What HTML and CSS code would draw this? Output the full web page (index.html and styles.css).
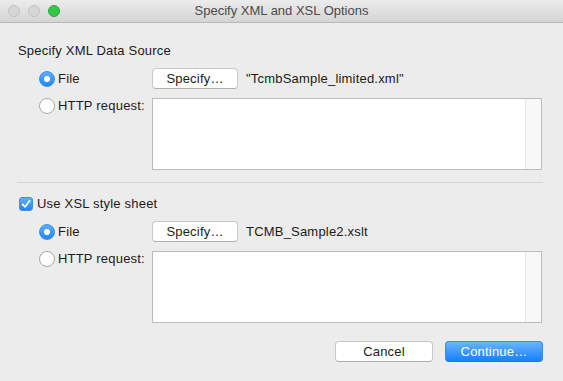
FILE: index.html
```html
<!DOCTYPE html>
<html>
<head>
<meta charset="utf-8">
<link rel="stylesheet" href="styles.css">
</head>
<body>
<div class="window">
  <div class="titlebar">
    <div class="lights">
      <span class="light off"></span>
      <span class="light off"></span>
      <span class="light green"></span>
    </div>
    <div class="title">Specify XML and XSL Options</div>
    <div></div>
  </div>
  <div class="content">
    <div class="heading">Specify XML Data Source</div>
    <div class="options">
      <div class="opt center">
        <span class="radio on"></span><span class="label">File</span>
      </div>
      <div class="ctrl file-row">
        <button class="btn">Specify…</button>
        <span class="filename">"TcmbSample_limited.xml"</span>
      </div>
      <div class="opt top">
        <span class="radio"></span><span class="label">HTTP request:</span>
      </div>
      <div class="ctrl">
        <div class="textarea"><div class="scroll"></div></div>
      </div>
    </div>
    <div class="separator"></div>
    <div class="check-row">
      <span class="checkbox"><svg width="10" height="10" viewBox="0 0 10 10"><path d="M1.6 5.4 L4 7.9 L8.6 1.8" fill="none" stroke="#fff" stroke-width="1.7" stroke-linecap="round" stroke-linejoin="round"/></svg></span>
      <span class="label">Use XSL style sheet</span>
    </div>
    <div class="options second">
      <div class="opt center">
        <span class="radio on"></span><span class="label">File</span>
      </div>
      <div class="ctrl file-row">
        <button class="btn">Specify…</button>
        <span class="filename">TCMB_Sample2.xslt</span>
      </div>
      <div class="opt top">
        <span class="radio"></span><span class="label">HTTP request:</span>
      </div>
      <div class="ctrl">
        <div class="textarea"><div class="scroll"></div></div>
      </div>
    </div>
    <div class="actions">
      <button class="btn action">Cancel</button>
      <button class="btn action primary">Continue…</button>
    </div>
  </div>
</div>
</body>
</html>
```
FILE: styles.css
```css
html, body {
  margin: 0;
  padding: 0;
}
body {
  font-family: "Liberation Sans", Arial, sans-serif;
  font-size: 13px;
  letter-spacing: 0.2px;
  color: #1b1b1b;
  background: #ececec;
}
.window {
  width: 563px;
  height: 381px;
  background: #ececec;
  overflow: hidden;
}
.titlebar {
  height: 22px;
  border-bottom: 1px solid #b9b9b9;
  background: linear-gradient(#ececec, #d4d4d4);
  display: grid;
  grid-template-columns: 1fr auto 1fr;
  align-items: center;
}
.lights {
  display: flex;
  gap: 8px;
  padding-left: 8px;
}
.light {
  box-sizing: border-box;
  width: 12px;
  height: 12px;
  border-radius: 50%;
}
.light.off {
  background: #d6d6d6;
  border: 1px solid #c2c2c2;
}
.light.green {
  background: #33c748;
  border: 1px solid #27aa35;
}
.title {
  color: #4a4a4a;
  font-size: 13px;
  letter-spacing: 0;
  line-height: 16px;
}
.content {
  padding: 0 20px 0 17px;
}
.heading {
  margin-top: 20px;
  padding-left: 1px;
  line-height: 16px;
}
.options {
  margin-top: 9px;
  margin-left: 22px;
  display: grid;
  grid-template-columns: 113px 1fr;
  row-gap: 9px;
}
.opt {
  display: flex;
  gap: 3px;
}
.opt.center {
  align-items: center;
}
.opt.top {
  align-items: flex-start;
}
.label {
  line-height: 16px;
}
.radio {
  width: 16px;
  height: 16px;
  box-sizing: border-box;
  border-radius: 50%;
  background: #fff;
  border: 1px solid #a9a9a9;
  display: flex;
  align-items: center;
  justify-content: center;
  flex: none;
}
.radio.on {
  border: 1px solid #3a8ff0;
  background: linear-gradient(#5eaefc, #2286f8);
}
.radio.on::after {
  content: "";
  width: 6px;
  height: 6px;
  border-radius: 50%;
  background: #fff;
}
.file-row {
  display: flex;
  align-items: center;
  gap: 8px;
}
.btn {
  font-family: "Liberation Sans", Arial, sans-serif;
  font-size: 13px;
  letter-spacing: 0.2px;
  color: #1b1b1b;
  height: 21px;
  width: 86px;
  padding: 0;
  background: #fff;
  border: 1px solid #c8c8c8;
  border-bottom-color: #b0b0b0;
  border-radius: 4px;
  box-sizing: border-box;
  line-height: 19px;
}
.filename {
  line-height: 16px;
}
.textarea {
  height: 72px;
  width: 390px;
  box-sizing: border-box;
  background: #fff;
  border: 1px solid #bcbcbc;
  display: flex;
  justify-content: flex-end;
}
.scroll {
  width: 15px;
  background: #f8f8f8;
  border-left: 1px solid #e8e8e8;
}
.separator {
  margin-top: 12px;
  height: 1px;
  background: #d6d6d6;
}
.check-row {
  margin-top: 13px;
  margin-left: 2px;
  display: flex;
  align-items: center;
  gap: 4px;
}
.checkbox {
  width: 14px;
  height: 14px;
  box-sizing: border-box;
  border-radius: 3px;
  background: linear-gradient(#5eaefc, #2286f8);
  border: 1px solid #3a8ff0;
  display: flex;
  align-items: center;
  justify-content: center;
}
.actions {
  margin-top: 18px;
  display: flex;
  justify-content: flex-end;
  gap: 12px;
}
.btn.action {
  width: 98px;
}
.btn.primary {
  color: #fff;
  background: linear-gradient(#6ab4fb, #1481fd);
  border: 1px solid #3d8ae6;
  border-bottom-color: #2a74d6;
}
```
